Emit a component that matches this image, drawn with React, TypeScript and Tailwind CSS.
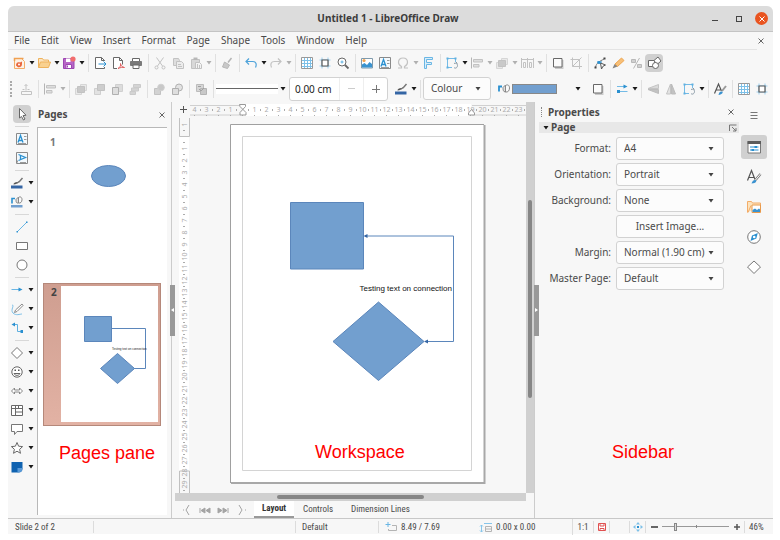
import { useState } from 'react';
import type { ReactNode } from 'react';

const G = '#c2c2c2';
const D = '#686868';
const B = '#2a90d0';

// all toolbar glyphs are drawn on a 16x16 grid
const icons: Record<string, ReactNode> = {
  new: (
    <>
      <path d="M3.5 3.5h7l3 3v7h-10z" fill="#fdf1e4" stroke="#f3ac68" />
      <path d="M3.5 6V3.500h9" stroke="#f0a050" strokeWidth="1.500" />
      <path d="M5 10.500c0-3 2-4 4-3l2-1v2.500c0 3-2 3.500-4 3.200z" fill="#e9663c" />
      <circle cx="8" cy="9.500" r="1" fill="#fff" />
    </>
  ),
  open: (
    <>
      <path d="M2.500 12.500v-9h4l1 1.500h5v2" fill="#fce3bd" stroke="#eeb25c" />
      <path d="M2.500 12.500l2-5.500h10l-2 5.500z" fill="#f9d190" stroke="#eeb25c" />
    </>
  ),
  save: (
    <>
      <path d="M2.500 3.500h10.500v10H2.500z" fill="#b766c6" stroke="#9b45b0" />
      <path d="M5 3.500h4.500V7H5z" fill="#fff" />
      <path d="M5 9.500h5.500v4H5z" fill="#fff" stroke="#9b45b0" />
      <path d="M6.500 10.500v2" stroke="#9b45b0" />
      <circle cx="12" cy="4" r="2.600" fill="#f26d6d" />
    </>
  ),
  exportDoc: (
    <>
      <path d="M12.500 6V5.500l-3-3h-6v11h9v-1.500" stroke={D} fill="#fff" />
      <path d="M9.500 2.500v3h3" stroke={D} />
      <path d="M6.500 9h7.500M11.500 6.500L14 9l-2.500 2.500" stroke={B} />
    </>
  ),
  pdf: (
    <>
      <path d="M7 13.500H3.500v-11h6l3 3v4" stroke={D} fill="#fff" />
      <path d="M9.500 2.500v3h3" stroke={D} />
      <path d="M8 13.500c2-1 3-3 2.500-5 .5 2.500 1.500 3.500 4 4-2-.5-4 0-6.500 1z" stroke="#e06060" />
    </>
  ),
  print: (
    <>
      <path d="M4.500 6V3.500h7V6" stroke={D} fill="#fff" />
      <path d="M2.500 6.500h11v4h-11z" fill="#7a7a7a" stroke="#7a7a7a" />
      <path d="M5 10h6v3.500H5z" stroke={D} fill="#fff" />
    </>
  ),
  cut: (
    <>
      <path d="M4.500 2.500l6 8.500M11.500 2.500l-6 8.500" stroke={G} />
      <circle cx="4.500" cy="12.500" r="1.500" stroke={G} />
      <circle cx="11.500" cy="12.500" r="1.500" stroke={G} />
    </>
  ),
  copy: (
    <>
      <path d="M3.500 3.500h5l1 2v5h-6z" fill="#dedede" stroke={G} />
      <path d="M6.500 6.500h5l2 2v5h-7z" fill="#ececec" stroke={G} />
      <path d="M8 9.500h3M8 11.500h4" stroke={G} />
    </>
  ),
  paste: (
    <>
      <path d="M3.500 4.500h8v9h-8z" fill="#d8d8d8" stroke={G} />
      <path d="M5.500 2.500h4V5h-4z" fill="#b8b8b8" />
      <path d="M7.500 7.500h4l2 2v4h-6z" fill="#f3f3f3" stroke={G} />
      <path d="M9.500 9v4M11.500 10v3" stroke={G} />
    </>
  ),
  brush: (
    <>
      <path d="M12.500 3L9 7.500" stroke="#b4b4b4" strokeWidth="1.500" />
      <path d="M5.500 7l5 3L8.500 13.500 3.500 12z" fill="#c8c8c8" stroke="#b8b8b8" />
    </>
  ),
  undo: <path d="M6 3.500L3 6.500 6 9.500M3 6.500h6.500c3.500 0 4.500 2.500 3 6" stroke="#4fa3da" strokeWidth="1.200" />,
  redo: <path d="M10 3.500l3 3-3 3M13 6.500H6.500c-3.500 0-4.500 2.500-3 6" stroke={G} strokeWidth="1.200" />,
  grid: (
    <>
      <path d="M2.500 2.500h11v11h-11z" fill="#fff" stroke="#999" />
      <path d="M5.500 3v10M8.500 3v10M11.500 3v10M3 5.500h10M3 8.500h10M3 11.500h10" stroke="#7cc0e8" />
    </>
  ),
  snap: (
    <>
      <path d="M5 2.500v11M11 2.500v11M2.500 5h11M2.500 11h11" stroke="#9bcfee" />
      <path d="M5 5h6v6H5z" fill="#fff" stroke="#555" strokeWidth="1.200" />
    </>
  ),
  zoom: (
    <>
      <circle cx="7" cy="7" r="4" fill="#fff" stroke={D} />
      <path d="M10 10l3.500 3.500" stroke={D} strokeWidth="1.800" />
      <path d="M5.500 7h3M7 5.500v3" stroke="#5fb0e0" />
    </>
  ),
  image: (
    <>
      <path d="M2.500 3.500h11v9.500h-11z" fill="#fff" stroke="#7f9aac" />
      <path d="M3 12.500v-3L5.500 8l2.500 2L10.500 7l2.500 2v3.500z" fill="#3a93cf" />
      <circle cx="5" cy="5.500" r="1.600" fill="#f2a34f" />
    </>
  ),
  textbox: (
    <>
      <path d="M2.500 2.500h11v11h-11z" fill="#f3f9fd" stroke="#8a8a8a" />
      <path d="M4 11.500l2.500-7 2.500 7M5 9.500h3" stroke={B} strokeWidth="1.300" />
      <path d="M10 5.500h2.500M10 8.500h2.500M4 12.500h8" stroke="#9a9a9a" />
    </>
  ),
  vtext: (
    <>
      <path d="M2.500 2.500h11v11h-11z" fill="#f3f9fd" stroke="#8a8a8a" />
      <path d="M4.500 4.500l7 3-7 3M6.500 5.500v4" stroke={B} strokeWidth="1.300" />
      <path d="M3.500 12.500v-2M6 12.500h6" stroke="#9a9a9a" />
    </>
  ),
  omega: <path d="M3 13h3.500v-1.500C4.500 10.500 3.500 9 3.500 7.200c0-2.700 2-4.200 4.500-4.200s4.500 1.500 4.500 4.200c0 1.800-1 3.300-3 4.300V13H13" stroke={G} strokeWidth="1.200" />,
  fontwork: <path d="M4.500 13.500v-11h8v2h-6v3h5v2h-5v4z" stroke="#6ab6e4" fill="#d9eefa" />,
  transform: (
    <>
      <path d="M4 3.500h7M3.500 4v8M4 12.500h4M11.500 4v3" stroke="#74bbe6" />
      <path d="M10 8.500c1.500-1 3.500 0 3.500 2S11.500 14 10 12.500M12 7l1.500 1.500" stroke="#8a9aa6" />
      <path d="M2.500 2.500h2v2h-2zM10.500 2.500h2v2h-2zM2.500 11.500h2v2h-2z" fill="#5fb0e0" />
    </>
  ),
  align: (
    <>
      <path d="M2.500 2.500v11" stroke="#b4b4b4" />
      <path d="M4.500 4.500h9v2.500h-9zM4.500 9.500h5.500v2.500H4.500z" fill="#dedede" stroke={G} />
    </>
  ),
  front: (
    <>
      <path d="M7.500 3.500h6v6h-6z" fill="#e9e9e9" stroke="#d6d6d6" />
      <path d="M2.500 7.500h6v6h-6z" fill="#e9e9e9" stroke="#d6d6d6" />
      <path d="M4.500 5.500h7v6h-7z" fill="#c9c9c9" stroke={G} />
    </>
  ),
  forward: (
    <>
      <path d="M3.500 7.500h6v6h-6z" fill="#e2e2e2" stroke="#cfcfcf" />
      <path d="M6.500 3.500h7v6h-7z" fill="#cdcdcd" stroke={G} />
    </>
  ),
  backward: (
    <>
      <path d="M6.500 3.500h7v7h-7z" fill="#dcdcdc" stroke="#d0d0d0" />
      <path d="M3.500 6.500h6v7h-6z" fill="#dedede" stroke="#b0b0b0" />
    </>
  ),
  back: <path d="M6.500 3.500h7v3h-7zM4.500 7h7v3h-7zM3 10.500h5.500v3H3z" fill="#d4d4d4" stroke="#cacaca" />,
  distribute: (
    <>
      <path d="M2.500 3v10M8.500 3v10M14.500 3v10" stroke={G} />
      <path d="M4.500 7.500h2v5h-2zM10.500 7.500h2v5h-2zM3 4.500h11" stroke={G} />
    </>
  ),
  shadow: (
    <>
      <path d="M5 5h8.500v9H5z" fill="#cacaca" />
      <path d="M3.500 3.500H12v8.500H3.500z" fill="#fbfbfb" stroke={D} />
    </>
  ),
  crop: <path d="M4.500 2.500v9H14M2.500 4.500h9V14M13.500 2.500l-9 9" stroke={G} />,
  points: (
    <>
      <path d="M3.500 12.500c1-5 4-6 8.500-8.500" stroke="#777" />
      <path d="M5 7h5" stroke={B} />
      <path d="M2.500 11.500h2v2h-2zM11.500 2.500h2v2h-2z" fill="#444" />
      <path d="M8.500 8l5 2-2.500 1.200L9.500 14z" fill="#fff" stroke="#555" />
      <circle cx="7" cy="7.500" r="1.600" fill={B} />
    </>
  ),
  pencil: (
    <>
      <path d="M11.500 3l2.500 2.500-6.500 6L5 9z" fill="#f7bf78" stroke="#eea650" />
      <path d="M2.500 13.500L4.500 9l3 2.500z" fill="#858585" />
    </>
  ),
  glue: (
    <>
      <path d="M3.500 4.500h4v3h-4zM9.500 9.500h4v3h-4z" fill="#d0d0d0" stroke="#b8b8b8" />
      <path d="M11.500 3l-6 10.500" stroke="#b8b8b8" />
    </>
  ),
  shapes: (
    <>
      <path d="M2.500 5.500h6v6h-6z" fill="#fff" stroke={D} />
      <path d="M8 5.500L12 2l3 4-4 3.500z" fill="#fff" stroke={D} />
      <circle cx="9.500" cy="10.500" r="3" fill="#fff" stroke={D} />
    </>
  ),
  anchor: <path d="M8 9.500V3.500M6.500 5L8 3.500 9.500 5M3.500 13.500h10v-3h-10zM4.500 8.500h2M9.500 8.500h2" stroke={G} />,
  toFront: (
    <>
      <path d="M3.500 7.500h6v6h-6z" fill="#d2d2d2" stroke={G} />
      <circle cx="10" cy="6.500" r="3.300" fill="#c8c8c8" stroke="#d0d0d0" />
    </>
  ),
  behind: (
    <>
      <circle cx="10" cy="6.500" r="3.500" fill="#e2e2e2" stroke="#b0b0b0" />
      <path d="M3.500 7.500h6v6h-6z" fill="#dedede" stroke="#b0b0b0" />
    </>
  ),
  reverse: (
    <>
      <path d="M3.500 3.500h7v7h-7z" fill="#d6d6d6" stroke="#bcbcbc" />
      <path d="M7.500 7.500h6v6h-6z" fill="#c8c8c8" stroke="#b4b4b4" />
      <path d="M5 5.500h3M6 8l2 2 3-3" stroke="#a0a0a0" />
    </>
  ),
  pen: (
    <>
      <path d="M2 10.500h11.500v3H2z" fill="#3465a4" />
      <path d="M8 8c1-.500 1.500-1 2.500-1.500L13.500 3" stroke="#777" strokeWidth="1.500" />
      <path d="M4.500 9.500c0-1.500 1.500-2.500 4-2.500.5 1.500-1.500 2.500-4 2.500z" fill="#555" />
    </>
  ),
  fill: (
    <>
      <path d="M3 10.500v-5h3" stroke={B} strokeWidth="1.800" />
      <path d="M7 6.500L9.500 4v7L8 10.500C7 9.500 7 8 7 6.500z" fill="#ddd" stroke="#888" />
      <path d="M9.500 4.500c2.500-1.500 4 0 4 2.500s-1.500 4.500-4 4z" fill="#fafafa" stroke="#888" />
    </>
  ),
  fillBar: (
    <>
      <path d="M2 11h11.500v2.500H2z" fill="#729fcf" />
      <path d="M3 9.500v-5h3" stroke={B} strokeWidth="1.600" />
      <path d="M7 5.500L9.500 3v6L8 9C7 8.500 7 7 7 5.500z" fill="#ddd" stroke="#888" />
      <path d="M9.500 3.500c2-1.500 3.500 0 3.500 2.200S11.500 9.500 9.500 9z" fill="#fafafa" stroke="#888" />
    </>
  ),
  arrows: (
    <>
      <path d="M3 5.500h9M4 10.500h9.500" stroke="#74bbe6" />
      <path d="M9.500 3.500l4 2-4 2z" fill={B} />
      <path d="M3 9h3v3H3z" fill={B} />
    </>
  ),
  flipV: (
    <>
      <path d="M3 7.500l10.500-4v4z" fill="#dadada" stroke="#c4c4c4" />
      <path d="M3 8.500l10.500 4v-4z" fill="#c2c2c2" stroke="#bcbcbc" />
    </>
  ),
  flipH: (
    <>
      <path d="M7.500 3v10H3.500z" fill="#e2e2e2" stroke="#c4c4c4" />
      <path d="M8.500 3v10h4z" fill="#c2c2c2" stroke="#bcbcbc" />
    </>
  ),
  styles: (
    <>
      <path d="M2.500 12.500L6.500 3l3 7M4 9h4.500" stroke="#555" strokeWidth="1.200" />
      <path d="M14 5l-4 5" stroke="#999" strokeWidth="2" />
      <path d="M6.500 14c.5-3 2-4 3.500-3.500s.5 3-3.500 3.500z" fill="#3a92d0" />
    </>
  ),
  pointer: <path d="M5.500 2.500v9.500l2-1.500 2 3.500 1.500-1-2-3.300 3-.5z" fill="#fff" stroke="#666" />,
  line: (
    <>
      <path d="M3.500 12.500l9-9" stroke="#6ab6e4" />
      <path d="M2.500 12h1.500v1.500H2.500zM12 2.500h1.500V4H12z" fill={B} />
    </>
  ),
  rect: <path d="M2.500 4.500h11v7h-11z" fill="#fff" stroke="#777" />,
  circle: <circle cx="8" cy="8" r="5" fill="#fff" stroke="#777" />,
  arrowLine: (
    <>
      <path d="M2.500 7.500h8" stroke="#6ab6e4" />
      <path d="M9.500 5.500l4 2-4 2z" fill={B} />
    </>
  ),
  curve: (
    <>
      <path d="M3 4c3 0-2 5 1 8s7 1 9 1" stroke="#7cc0e8" />
      <path d="M13 3L6.500 9l-1 2.500L8 10.500 14 4.500z" fill="#fff" stroke="#888" />
    </>
  ),
  connector: (
    <>
      <path d="M4 4.500h4.500v7h4" stroke="#5fb0e0" />
      <path d="M6 2.500v4l-3.500-2zM11.500 10h2.500v3h-2.500z" fill={B} />
    </>
  ),
  diamond: <path d="M8 2.500L13.500 8 8 13.500 2.500 8z" fill="#fff" stroke="#777" />,
  smiley: (
    <>
      <circle cx="8" cy="8" r="5.200" fill="#fff" stroke="#666" />
      <path d="M5 9.500c1 2.500 5 2.500 6 0z" stroke="#666" />
      <path d="M5.500 5.500h1.500V7H5.500zM9 5.500h1.500V7H9z" fill="#555" />
    </>
  ),
  doubleArrow: <path d="M2.500 8l3-3v2h5V5l3 3-3 3V9h-5v2z" fill="#fff" stroke="#888" />,
  flowchart: (
    <path d="M2.500 3.500h11v10h-11zM6.500 3.500v10M2.500 6.500h11M6.500 10h7M9.500 3.500v3" fill="#fff" stroke={D} />
  ),
  callout: <path d="M2.500 3.500h11v7H8l-2.500 3v-3h-3z" fill="#fff" stroke="#777" />,
  star: <path d="M8 2.500l1.600 3.700 4 .4-3 2.700.9 4L8 11.200l-3.500 2.100.9-4-3-2.700 4-.4z" fill="#fff" stroke={D} />,
  cube: (
    <>
      <path d="M2.500 3h11v6.500c0 2.500-1.500 4-4 4h-7z" fill="#0f62b0" />
      <path d="M8.500 9h5c0 3-1.500 4.500-5 4.500z" fill="#5a9ad8" />
    </>
  ),
  hamburger: <path d="M4.500 4.500h7M4.500 7.500h7M4.500 10.500h7" stroke="#777" />,
  properties: (
    <>
      <path d="M2 2.500h12.500V14H2z" fill="#fff" stroke="#777" />
      <path d="M1.500 2H15v3H1.500z" fill="#5c5c5c" />
      <path d="M4 8h8.500M4 11h8.500" stroke={B} />
      <path d="M8.500 7H11v2H8.500zM5.500 10H8v2H5.500z" fill={B} />
    </>
  ),
  deckStyles: (
    <>
      <path d="M1.500 11.500L5.500 1.500l3.500 9M3 8.500h5.500" stroke="#555" strokeWidth="1.200" />
      <path d="M14.500 5l-5 6" stroke="#777" strokeWidth="2.400" />
      <path d="M14.500 5l-5 6" stroke="#fff" />
      <path d="M5.500 14.500c1-3 2.500-4 4-3.500s1 3.500-4 3.500z" fill="#3a92d0" />
    </>
  ),
  gallery: (
    <>
      <path d="M1.500 13.500v-11h4l1 1.500h8v3" fill="#fce3bd" stroke="#f3ac68" />
      <path d="M2 13.500l3-7" stroke="#f3ac68" />
      <path d="M6 6h8.500v7.500H6z" fill="#fff" stroke="#e89a4c" />
      <path d="M6.500 13v-2L9 9.500l2 1.500 2-1.500 1 1V13z" fill="#3a93cf" />
    </>
  ),
  navigator: (
    <>
      <circle cx="8" cy="8" r="6.300" fill="#fff" stroke="#777" />
      <path d="M11.800 4L10.300 9.500 4.500 12 6 6.500z" fill={B} />
      <circle cx="8.200" cy="8" r="1.300" fill="#fff" />
    </>
  ),
  deckShapes: <path d="M8 2L14.500 8 8 14.500 1.500 8z" fill="#fff" stroke="#777" />,
  close: <path d="M5.500 5.500l5 5M10.500 5.500l-5 5" stroke="#666" />,
  fit: (
    <>
      <path d="M8 3l2 2.500H6zM8 13l2-2.500H6zM3 8l2.500-2v4zM13 8l-2.500-2v4z" fill="#7cc0e8" />
      <path d="M7 7h2v2H7z" fill={B} />
    </>
  ),
  modified: <path d="M4.500 4.500h7v7h-7zM6 4.500V7h4V4.500M6 11.500v-2h4v2" fill="#fff" stroke="#e05050" />,
  position: (
    <>
      <path d="M2.500 5.500h5M5 3v5" stroke="#6ab6e4" />
      <path d="M9 6.500h4.500v5h-8V10" stroke="#b4b4b4" />
    </>
  ),
  size: (
    <>
      <path d="M3.500 6v7M2 7.500L3.500 6 5 7.500M2 11.500L3.500 13 5 11.500M6 4.500h8" stroke="#86c5ea" />
      <path d="M7.500 7.500h6v5h-6zM7.500 10h6" stroke="#b4b4b4" />
    </>
  ),
};

const Glyph = ({ name }: { name: string }) => (
  <svg viewBox="0 0 16 16" className="h-4 w-4 shrink-0" fill="none" aria-hidden="true">
    {icons[name]}
  </svg>
);

const Caret = ({ dim, grey }: { dim?: boolean; grey?: boolean }) => (
  <svg viewBox="0 0 6 4" className="h-1 w-1.5 shrink-0" aria-hidden="true">
    <path d="M.500 0h5L3 3.500z" fill={dim ? '#b0b0b0' : grey ? '#444' : '#1a1a1a'} />
  </svg>
);

const Tool = ({ name, active }: { name: string; active?: boolean }) => (
  <button
    aria-label={name}
    className={`flex h-[18px] w-[18px] shrink-0 items-center justify-center rounded-sm ${active ? 'bg-[#d0d0d0]' : 'hover:bg-gray-200'}`}
  >
    <Glyph name={name} />
  </button>
);

const More = ({ name, dim, wide }: { name: string; dim?: boolean; wide?: boolean }) => (
  <button
    aria-label={`${name} options`}
    className={`flex h-[18px] shrink-0 items-center justify-center ${wide ? 'w-[9px]' : 'w-[7px]'}`}
  >
    <Caret dim={dim} />
  </button>
);

const Sep = () => (
  <span className="flex h-[18px] w-1.5 shrink-0 justify-center">
    <span className="w-px bg-[#e0e0e0]" />
  </span>
);

// "|" is a separator, a trailing "+" adds a dropdown, "-" a greyed out one, "*" is pressed
const standardBar = [
  'new+', 'open+', 'save+', '|', 'exportDoc', 'pdf', 'print', '|', 'cut', 'copy', 'paste-', '|', 'brush', '|',
  'undo+', 'redo-', '|', 'grid', 'snap', 'zoom', '|', 'image', 'textbox', 'omega-', 'fontwork', '|',
  'transform+', 'align-', 'front-', 'distribute-', '|', 'shadow', 'crop', '|', 'points', 'pencil', 'glue', 'shapes*',
];
const arrangeBar = ['anchor', '|', 'align-', '|', 'front', 'forward', 'backward', 'back', '|', 'toFront', 'behind', '|', 'reverse', '|'];
const objectBar = ['shadow', '|', 'arrows+', '|', 'flipV', 'flipH', 'transform+', '|', 'styles', '|', 'grid', 'snap'];

const Tools = ({ items }: { items: string[] }) => (
  <div className="flex shrink-0 items-center">
    {items.map((item, i) => {
      if (item === '|') return <Sep key={i} />;
      const flag = item.slice(-1);
      const name = item.replace(/[+*-]$/, '');
      return (
        <div key={i} className="flex items-center">
          <Tool name={name} active={flag === '*'} />
          {(flag === '+' || flag === '-') && <More name={name} dim={flag === '-'} />}
        </div>
      );
    })}
  </div>
);

const drawBar = [
  'pointer*', '|', 'textbox', 'vtext', '|', 'pen+', 'fillBar+', '|', 'line', 'rect', 'circle', '|',
  'arrowLine+', 'curve+', 'connector+', '|', 'diamond+', 'smiley+', 'doubleArrow+', 'flowchart+', 'callout+', 'star+', 'cube+',
];

const DrawBar = () => (
  <div className="flex w-[29px] shrink-0 flex-col items-center pt-0.5 pr-0.5">
    {drawBar.map((item, i) => {
      if (item === '|') return <span key={i} className="mt-[3px] mb-0.5 h-px w-3.5 shrink-0 bg-[#d8d8d8]" />;
      const name = item.replace(/[+*]$/, '');
      return (
        <div key={i} className="flex h-[19px] shrink-0 items-center">
          <Tool name={name} active={item.endsWith('*')} />
          {item.endsWith('+') && <More name={name} wide />}
        </div>
      );
    })}
  </div>
);

const menus = ['File', 'Edit', 'View', 'Insert', 'Format', 'Page', 'Shape', 'Tools', 'Window', 'Help'];

const PagesPane = () => (
  <section className="flex w-[133px] shrink-0 flex-col pb-[3px]">
    <div className="flex h-[25px] shrink-0 items-center justify-between pl-px">
      <h2 className="text-[10px] font-bold">Pages</h2>
      <button aria-label="Close pages pane">
        <Glyph name="close" />
      </button>
    </div>
    <div className="mr-[3px] flex-1 border-t border-l border-[#b8b8b8] bg-white pl-[5px]">
      <button className="flex h-[155px] w-[118px] items-start pt-2 pl-[7px] text-[10px] leading-3 font-bold text-[#777]">
        <span className="w-3 text-left">1</span>
        <svg viewBox="0 0 97 140" className="h-[140px] w-[97px]" aria-hidden="true">
          <ellipse cx="46.500" cy="40" rx="17" ry="10.500" fill="#729fcf" stroke="#5b86bb" />
        </svg>
      </button>
      <button className="flex h-[143px] w-[118px] items-start border border-[#b5887a] bg-linear-to-b from-[#cf9e90] to-[#e2b2a4] pt-0.5 pl-[7px] text-[10px] leading-3 font-bold text-[#444]">
        <span className="w-2.5 text-left">2</span>
        <svg viewBox="61 286 97 136" className="h-[136px] w-[97px] bg-white" aria-hidden="true">
          <g fill="#729fcf" stroke="#5b86bb">
            <path d="M84.500 316.500h27v25h-27z" />
            <path d="M117.500 353.500l17 15-17 15-17-15z" />
            <path d="M112 328.500h33.500v40H134" fill="none" />
          </g>
          <text x="112" y="349.500" className="font-[Liberation_Sans,sans-serif] text-[3px] font-normal" fill="#222">Testing text on connection</text>
        </svg>
      </button>
      <p className="mt-[13px] pl-4 font-[Liberation_Sans,sans-serif] text-lg text-[#f00]">Pages pane</p>
    </div>
  </section>
);

const Splitter = ({ right }: { right?: boolean }) => (
  <div className={`flex w-[5px] shrink-0 items-center bg-[linear-gradient(#ccc,#ccc)] bg-[length:1px_100%] bg-no-repeat ${right ? 'bg-[position:0_0]' : 'bg-[position:1px_0]'}`}>
    <button aria-label={right ? 'Hide sidebar' : 'Hide pages'} className="flex h-[51px] w-[5px] items-center bg-[#999]">
      <svg viewBox="0 0 5 6" className="h-1.5 w-[5px]" aria-hidden="true">
        <path d={right ? 'M1 1l3 2-3 2z' : 'M4 1L1 3l3 2z'} fill="#fff" />
      </svg>
    </button>
  </div>
);

const range = (from: number, to: number) => Array.from({ length: to - from + 1 }, (_, i) => from + i);

const HRuler = () => (
  <svg viewBox="190 102 336 14" className="h-3.5 w-[336px] shrink-0" aria-hidden="true">
    <path d="M242 104h229v12H242z" fill="#fff" />
    <path d="M190 105.500h50M190 115h50M472 105.500h54M472 115h54" stroke="#d0d0d0" fill="none" />
    {range(-4, 23).map((n) => (
      <g key={n} fill="#acacac">
        {n !== 0 && (
          <text x={242.5 + n * 12} y="112" fontSize="7" textAnchor="middle">{Math.abs(n)}</text>
        )}
        <path d={`M${248 + n * 12} 109h1v2h-1zM${242 + n * 12} 115h1v1h-1z`} />
      </g>
    ))}
    <path d="M239.500 104.500h6v2l-5.500 6v2.500h6v-2.500l-6-6zM468.500 115v-2l3-3.500 3 3.500v2z" fill="#fff" stroke="#999" />
  </svg>
);

const VRuler = () => (
  <svg viewBox="175 116 15 377" className="h-full w-[15px] shrink-0" preserveAspectRatio="xMidYMin slice" aria-hidden="true">
    <path d="M179 137h10v334h-10z" fill="#fff" />
    <path d="M179.500 118v18.500h10V118M179.500 493v-22h10v22" stroke="#c0c0c0" fill="none" />
    {range(-1, 29).map((n) => (
      <g key={n} fill="#acacac">
        {n !== 0 && (
          <text transform={`translate(186.500 ${136.500 + n * 12}) rotate(-90)`} fontSize="7" textAnchor="middle">{Math.abs(n)}</text>
        )}
        <path d={`M183 ${142 + n * 12}h2v1h-2z`} />
      </g>
    ))}
  </svg>
);

const Canvas = () => (
  <div className="flex min-w-0 flex-1 items-start justify-center overflow-hidden">
    <svg viewBox="190 116 336 377" className="h-[377px] w-[336px] shrink-0" aria-label="Drawing page">
      <path d="M231 125h253.500v358H231z" fill="#fff" />
      <path d="M484.500 125v358M231 483h254.500" stroke="#a8a8a8" strokeWidth="2" />
      <path d="M230.500 483v-358.500h253.500" fill="none" stroke="#a0a0a0" />
      <path d="M242.500 136.500h229v334h-229z" fill="none" stroke="#d4d4d4" />
      <g fill="#729fcf" stroke="#5b86bb">
        <path d="M290.500 202.500h73v66.500h-73z" />
        <path d="M378.500 302l45.500 39.500-45.500 39-45.500-39z" />
        <path d="M365 236h88.500v105.500H425" fill="none" />
      </g>
      <path d="M363.500 236l4-2v4zM424 341.500l4-2v4z" fill="#3465a4" />
      <text x="452" y="291" textAnchor="end" className="font-[Liberation_Sans,sans-serif] text-[8px]" fill="#111">Testing text on connection</text>
      <text x="315" y="458" className="font-[Liberation_Sans,sans-serif] text-[18px]" fill="#f00">Workspace</text>
    </svg>
  </div>
);

const layerNav = [
  { label: 'First', d: 'M9 2L6 7l3 5M3 7h1' },
  { label: 'Previous', d: 'M2 5v5M7 5v5L3 7.500zM12 5v5L8 7.500z' },
  { label: 'Next', d: 'M12 5v5M7 5v5l4-2.500zM2 5v5l4-2.500z' },
  { label: 'Last', d: 'M5 2l3 5-3 5M11 7h1' },
];

const Workspace = () => (
  <main className="flex min-w-0 flex-1 flex-col">
    <div className="flex min-h-0 flex-1">
      <div className="flex min-w-0 flex-1 flex-col">
        <div className="flex h-3.5 overflow-hidden">
          <svg viewBox="0 0 15 14" className="h-3.5 w-[15px] shrink-0" aria-hidden="true">
            <path d="M5 7.500h7M8.500 4v7" stroke="#555" />
          </svg>
          <HRuler />
        </div>
        <div className="flex min-h-0 flex-1">
          <VRuler />
          <Canvas />
        </div>
        <div className="flex h-2 shrink-0 items-center bg-[#d0d0d0] px-[29%]">
          <div className="h-1 w-full rounded-full bg-[#868686]" />
        </div>
      </div>
      <div className="mb-2 flex w-2 shrink-0 flex-col items-center bg-[#d0d0d0] pt-[98px]">
        <div className="h-[198px] w-1 rounded-full bg-[#868686]" />
      </div>
    </div>
    <nav className="flex h-[17px] shrink-0 items-stretch pl-[3px] font-[Roboto_Condensed,Liberation_Sans_Narrow,Roboto,sans-serif] text-[9px]">
      {layerNav.map((b) => (
        <button key={b.label} aria-label={b.label} className="flex w-[18px] items-center justify-center">
          <svg viewBox="0 0 14 14" className="h-3.5 w-3.5" aria-hidden="true">
            <path d={b.d} stroke="#a4a4a4" fill={b.d.includes('z') ? '#a4a4a4' : 'none'} />
          </svg>
        </button>
      ))}
      <button className="ml-1 border-b-2 border-[#999] bg-white px-2 font-bold text-[#333]">Layout</button>
      <button className="px-[9px]">Controls</button>
      <button className="px-[9px]">Dimension Lines</button>
    </nav>
  </main>
);

const fields = [
  { id: 'format', label: 'Format:', options: ['A4', 'A5', 'Letter'] },
  { id: 'orientation', label: 'Orientation:', options: ['Portrait', 'Landscape'] },
  { id: 'background', label: 'Background:', options: ['None', 'Color'] },
  { id: 'margin', label: 'Margin:', options: ['Normal (1.90 cm)', 'None'] },
  { id: 'master', label: 'Master Page:', options: ['Default'] },
];

const Picker = ({ id, options }: { id: string; options: string[] }) => (
  <div className="relative flex h-[23px] items-center">
    <select id={id} className="h-full w-full appearance-none rounded-[3px] border border-[#d2d2d2] bg-[#fcfcfc] pr-3 pl-[7px]">
      {options.map((o) => <option key={o}>{o}</option>)}
    </select>
    <span className="pointer-events-none absolute right-2.5">
      <Caret grey />
    </span>
  </div>
);

const deck = ['properties', 'deckStyles', 'gallery', 'navigator', 'deckShapes'];

const Sidebar = () => {
  const [tab, setTab] = useState('properties');

  return (
    <aside className="flex w-[234px] shrink-0">
      <div className="flex w-[200px] flex-col">
        <div className="flex h-5 shrink-0 items-center">
          <span className="mx-0.5 h-2.5 border-l border-dotted border-[#888]" />
          <h2 className="flex-1 pl-1 text-[10px] font-bold">Properties</h2>
          <button aria-label="Close sidebar">
            <Glyph name="close" />
          </button>
        </div>
        <div className="flex h-[11px] shrink-0 items-center gap-0.5 bg-[#e8e8e8] pr-0.5 pl-1">
          <Caret />
          <h3 className="flex-1 text-[10px] leading-[11px] font-bold">Page</h3>
          <svg viewBox="0 0 8 8" className="h-2 w-2" fill="none" aria-hidden="true">
            <path d="M.500 7V1h7M3 3l4 4M7 4v3H4" stroke="#777" />
          </svg>
        </div>
        <form className="grid grid-cols-[72px_108px] items-center gap-x-[5px] gap-y-[3px] pt-1">
          {fields.map((f) => (
            <div key={f.id} className="contents">
              <label htmlFor={f.id} className="text-right whitespace-nowrap">{f.label}</label>
              <Picker id={f.id} options={f.options} />
              {f.id === 'background' && (
                <button type="button" className="col-start-2 h-[23px] rounded-[3px] border border-[#d2d2d2] bg-[#fcfcfc]">
                  Insert Image...
                </button>
              )}
            </div>
          ))}
        </form>
        <p className="mt-[148px] pl-[73px] font-[Liberation_Sans,sans-serif] text-lg text-[#f00]">Sidebar</p>
      </div>
      <div className="flex flex-1 flex-col items-center gap-1.5 pt-1 pr-1">
        <button aria-label="Sidebar settings" className="flex h-[23px] w-[26px] items-start justify-center pt-0.5">
          <Glyph name="hamburger" />
        </button>
        {deck.map((name) => (
          <button
            key={name}
            aria-label={`${name} deck`}
            onClick={() => setTab(name)}
            className={`flex h-6 w-[26px] items-center justify-center rounded-[3px] ${tab === name ? 'bg-[#d0d0d0]' : ''}`}
          >
            <Glyph name={name} />
          </button>
        ))}
      </div>
    </aside>
  );
};

const StatusBar = () => {
  const [zoom, setZoom] = useState(19);

  return (
    <footer className="flex h-4 shrink-0 items-center border-t border-[#c8c8c8] font-[Roboto_Condensed,Liberation_Sans_Narrow,Roboto,sans-serif] text-[9px] whitespace-nowrap">
      <span className="w-[86px] border-r border-[#dcdcdc] pl-[7px] leading-3">Slide 2 of 2</span>
      <span className="flex-1 border-r border-[#dcdcdc] leading-3">&nbsp;</span>
      <span className="w-[83px] border-r border-[#dcdcdc] pl-1.5 leading-3">Default</span>
      <span className="flex w-[95px] items-center gap-0.5 pl-1 leading-3"><Glyph name="position" />8.49 / 7.69</span>
      <span className="flex w-[99px] items-center gap-0.5 border-r border-[#dcdcdc] pl-1 leading-3"><Glyph name="size" />0.00 x 0.00</span>
      <span className="w-[21px] border-r border-[#dcdcdc] text-center leading-3">1:1</span>
      <span className="flex h-3 w-4 items-center justify-center border-r border-[#dcdcdc]"><Glyph name="modified" /></span>
      <span className="h-3 w-5 border-r border-[#dcdcdc]" />
      <button aria-label="Fit page" className="flex h-3 w-4 items-center justify-center border-r border-[#dcdcdc]"><Glyph name="fit" /></button>
      <button aria-label="Zoom out" className="flex w-4 justify-center">
        <span className="h-0.5 w-[7px] bg-[#666]" />
      </button>
      <div className="relative flex w-[67px] items-center">
        <span className="absolute left-1/2 h-[3px] w-px bg-[#888]" />
        <input
          type="range"
          aria-label="Zoom"
          value={zoom}
          onChange={(e) => setZoom(Number(e.target.value))}
          className="h-2 w-full appearance-none bg-[linear-gradient(#999,#999)] bg-[length:100%_1px] bg-center bg-no-repeat [&::-webkit-slider-thumb]:h-2 [&::-webkit-slider-thumb]:w-[3px] [&::-webkit-slider-thumb]:appearance-none [&::-webkit-slider-thumb]:border [&::-webkit-slider-thumb]:border-[#888] [&::-webkit-slider-thumb]:bg-[#ddd]"
        />
      </div>
      <button aria-label="Zoom in" className="flex w-[15px] justify-center">
        <svg viewBox="0 0 8 8" className="h-2 w-2" aria-hidden="true">
          <path d="M1 4h6M4 1v6" stroke="#555" strokeWidth="1.500" />
        </svg>
      </button>
      <span className="w-[29px] border-l border-[#dcdcdc] pl-1 leading-3">46%</span>
    </footer>
  );
};

const LineBar = () => (
  <div className="flex h-[27px] shrink-0 items-center overflow-hidden pl-0.5">
    <span className="mr-[5px] h-4 shrink-0 border-l-2 border-dotted border-[#aaa]" />
    <Tools items={arrangeBar} />
    <button aria-label="Line style" className="flex h-2.5 w-[62px] shrink-0 items-center bg-white">
      <span className="h-px w-full bg-[#666]" />
    </button>
    <More name="Line style" wide />
    <div className="mr-1 ml-0.5 flex h-6 w-[99px] shrink-0 items-center rounded-[3px] border border-[#d2d2d2] bg-white">
      <input aria-label="Line width" defaultValue="0.00 cm" className="h-full w-[50px] border-r border-[#eee] pl-[5px] text-[#222]" />
      <button aria-label="Decrease" className="flex h-full w-6 items-center justify-center border-r border-[#eee]">
        <span className="h-px w-[7px] bg-[#ccc]" />
      </button>
      <button aria-label="Increase" className="flex flex-1 justify-center">
        <svg viewBox="0 0 8 8" className="h-2 w-2" aria-hidden="true">
          <path d="M0 4.500h8M4.500 0v8" stroke="#777" />
        </svg>
      </button>
    </div>
    <Tools items={['pen+', '|']} />
    <div className="w-[68px] shrink-0">
      <Picker id="area-style" options={['Colour', 'None', 'Gradient']} />
    </div>
    <label htmlFor="area-style" className="flex w-[21px] shrink-0 justify-end" aria-label="Area style">
      <Glyph name="fill" />
    </label>
    <button aria-label="Fill colour" className="h-2.5 w-[45px] shrink-0 border border-[#888] bg-[#729fcf]" />
    <div className="flex w-8 shrink-0 items-center justify-center pl-2.5">
      <More name="Fill colour" />
    </div>
    <Tools items={objectBar} />
  </div>
);

export default function App() {
  return (
    <div className="flex min-h-screen flex-col bg-white pt-1.5 pr-[7px] pb-1.5 pl-2 font-[Noto_Sans,sans-serif] text-[10px] text-[#4a4a4a]">
      <div className="flex flex-1 flex-col rounded-t-md bg-[#f7f7f7]">
        <header className="flex h-[26px] shrink-0 items-center rounded-t-md border-b border-[#c4c4c4] bg-[#dcdcdc]">
          <span className="flex-1" />
          <h1 className="text-[10px] font-bold text-[#3c3c3c]">Untitled 1 - LibreOffice Draw</h1>
          <div className="flex flex-1 items-center justify-end pr-[5px]">
            <button aria-label="Minimize" className="flex w-6 justify-center">
              <span className="mt-1 h-px w-1.5 bg-[#444]" />
            </button>
            <button aria-label="Maximize" className="flex w-6 justify-center">
              <span className="h-1.5 w-1.5 border border-[#444]" />
            </button>
            <button aria-label="Close" className="ml-1 flex h-[13px] w-[13px] items-center justify-center rounded-full bg-[#e95420]">
              <svg viewBox="0 0 6 6" className="h-1.5 w-1.5" aria-hidden="true">
                <path d="M.500.500l5 5M5.500.500l-5 5" stroke="#fff" />
              </svg>
            </button>
          </div>
        </header>
        <nav className="mr-4 flex h-[18px] shrink-0 items-center gap-[11px] border-b border-[#e4e4e4] pl-1.5 text-[10px]">
          {menus.map((m) => <button key={m}>{m}</button>)}
          <button aria-label="Close document" className="-mr-3 ml-auto">
            <Glyph name="close" />
          </button>
        </nav>
        <div className="flex h-[25px] shrink-0 items-center overflow-hidden pl-0.5">
          <Tools items={standardBar} />
        </div>
        <LineBar />
        <div className="flex min-h-0 flex-1">
          <DrawBar />
          <PagesPane />
          <Splitter />
          <Workspace />
          <Splitter right />
          <Sidebar />
        </div>
        <StatusBar />
      </div>
    </div>
  );
}
